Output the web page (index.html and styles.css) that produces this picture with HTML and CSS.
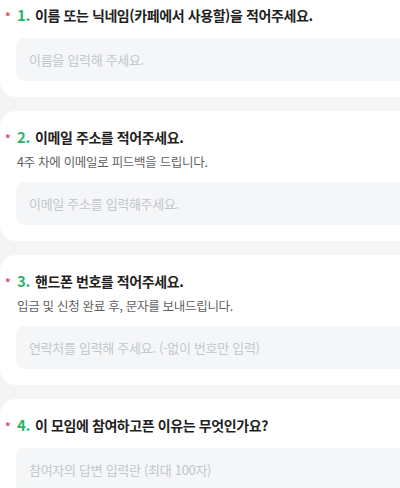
FILE: index.html
```html
<!DOCTYPE html>
<html lang="ko">
<head>
<meta charset="utf-8">
<link rel="stylesheet" href="styles.css">
</head>
<body>
<div class="form">
  <section class="card">
    <h2 class="q"><span class="req">*</span><span class="num">1.</span><span class="qt">이름 또는 닉네임(카페에서 사용할)을 적어주세요.</span></h2>
    <div class="field">이름을 입력해 주세요.</div>
  </section>
  <section class="card">
    <h2 class="q"><span class="req">*</span><span class="num">2.</span><span class="qt">이메일 주소를 적어주세요.</span></h2>
    <p class="desc">4주 차에 이메일로 피드백을 드립니다.</p>
    <div class="field">이메일 주소를 입력해주세요.</div>
  </section>
  <section class="card">
    <h2 class="q"><span class="req">*</span><span class="num">3.</span><span class="qt">핸드폰 번호를 적어주세요.</span></h2>
    <p class="desc">입금 및 신청 완료 후, 문자를 보내드립니다.</p>
    <div class="field">연락처를 입력해 주세요. (-없이 번호만 입력)</div>
  </section>
  <section class="card">
    <h2 class="q"><span class="req">*</span><span class="num">4.</span><span class="qt">이 모임에 참여하고픈 이유는 무엇인가요?</span></h2>
    <div class="field">참여자의 답변 입력란 (최대 100자)</div>
  </section>
</div>
</body>
</html>
```
FILE: styles.css
```css
html, body {
  margin: 0;
  padding: 0;
  background: #f3f4f6;
  overflow: hidden;
  height: 488px;
}
body {
  font-family: "Noto Sans CJK KR", "Noto Sans", sans-serif;
}
.form {
  margin-top: -11px;
  display: flex;
  flex-direction: column;
  gap: 14px;
  width: 420px;
}
.card {
  background: #ffffff;
  border-radius: 16px;
  padding: 15px 0 16px 0;
}
.q {
  margin: 0 0 12px 0;
  display: flex;
  align-items: center;
  height: 22px;
  font-size: 14px;
  line-height: 22px;
  font-weight: 700;
  color: #1f1f1f;
  letter-spacing: -0.4px;
}
.req {
  color: #e0485a;
  font-size: 11px;
  line-height: 11px;
  width: 6px;
  margin-left: 5px;
  margin-right: 6px;
  padding-top: 3px;
}
.num {
  color: #2bb567;
  margin-right: 5px;
  font-size: 15px;
}
.desc {
  margin: -8px 0 10px 17px;
  font-size: 12.5px;
  line-height: 20px;
  color: #5f5f5f;
  letter-spacing: -0.3px;
}
.field {
  margin-left: 16px;
  height: 43px;
  box-sizing: border-box;
  background: #f5f6f8;
  border-radius: 8px;
  padding: 0 13px;
  display: flex;
  align-items: center;
  font-size: 13px;
  color: #c3c6cc;
  letter-spacing: -0.3px;
}
```
